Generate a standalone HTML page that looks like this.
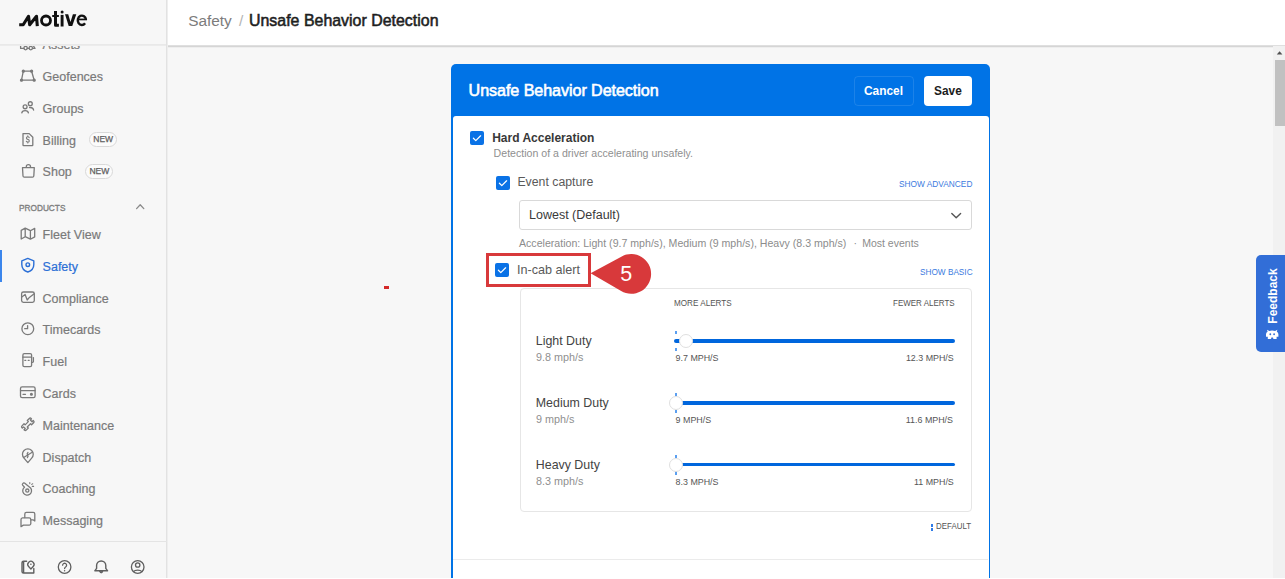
<!DOCTYPE html><html><head><meta charset="utf-8"><style>
*{margin:0;padding:0;box-sizing:border-box}
html,body{width:1285px;height:579px;overflow:hidden;background:#f7f7f7;font-family:"Liberation Sans",sans-serif}
.t{position:absolute;white-space:nowrap}
.a{position:absolute}
#sb{position:absolute;left:0;top:0;width:167px;height:579px;background:#f7f7f7;border-right:1px solid #e2e2e2}
#sbh{position:absolute;left:0;top:0;width:166px;height:44px;background:#f7f7f7}
#hd{position:absolute;left:168px;top:0;width:1117px;height:45px;background:#fff}
.badge{position:absolute;width:28px;height:14.6px;border:1px solid #d9d9d9;background:#fbfbfb;border-radius:7.5px;font-size:8.5px;font-weight:400;-webkit-text-stroke:0.25px #606060;color:#606060;text-align:center;line-height:12.2px;letter-spacing:0px}
.cb{position:absolute;width:14px;height:14px;border-radius:2px;background:#0a72e6}
.cb svg{position:absolute;left:0;top:0}
</style></head><body>
<div id="sb"></div>
<div class="t" style="left:42.60px;top:39.12px;font-size:12.5px;line-height:12.5px;color:#7a7a7a;font-weight:400;-webkit-text-stroke:0.2px #7a7a7a;">Assets</div>
<div class="t" style="left:42.60px;top:70.92px;font-size:12.5px;line-height:12.5px;color:#7a7a7a;font-weight:400;-webkit-text-stroke:0.2px #7a7a7a;">Geofences</div>
<div class="t" style="left:42.60px;top:102.72px;font-size:12.5px;line-height:12.5px;color:#7a7a7a;font-weight:400;-webkit-text-stroke:0.2px #7a7a7a;">Groups</div>
<div class="t" style="left:42.60px;top:134.52px;font-size:12.5px;line-height:12.5px;color:#7a7a7a;font-weight:400;-webkit-text-stroke:0.2px #7a7a7a;">Billing</div>
<div class="t" style="left:42.60px;top:166.32px;font-size:12.5px;line-height:12.5px;color:#7a7a7a;font-weight:400;-webkit-text-stroke:0.2px #7a7a7a;">Shop</div>
<div class="t" style="left:42.60px;top:228.92px;font-size:12.5px;line-height:12.5px;color:#7a7a7a;font-weight:400;-webkit-text-stroke:0.2px #7a7a7a;">Fleet View</div>
<div class="t" style="left:42.60px;top:260.72px;font-size:12.5px;line-height:12.5px;color:#2b6fd6;font-weight:400;-webkit-text-stroke:0.2px #2b6fd6;">Safety</div>
<div class="t" style="left:42.60px;top:292.52px;font-size:12.5px;line-height:12.5px;color:#7a7a7a;font-weight:400;-webkit-text-stroke:0.2px #7a7a7a;">Compliance</div>
<div class="t" style="left:42.60px;top:324.32px;font-size:12.5px;line-height:12.5px;color:#7a7a7a;font-weight:400;-webkit-text-stroke:0.2px #7a7a7a;">Timecards</div>
<div class="t" style="left:42.60px;top:356.12px;font-size:12.5px;line-height:12.5px;color:#7a7a7a;font-weight:400;-webkit-text-stroke:0.2px #7a7a7a;">Fuel</div>
<div class="t" style="left:42.60px;top:387.92px;font-size:12.5px;line-height:12.5px;color:#7a7a7a;font-weight:400;-webkit-text-stroke:0.2px #7a7a7a;">Cards</div>
<div class="t" style="left:42.60px;top:419.72px;font-size:12.5px;line-height:12.5px;color:#7a7a7a;font-weight:400;-webkit-text-stroke:0.2px #7a7a7a;">Maintenance</div>
<div class="t" style="left:42.60px;top:451.52px;font-size:12.5px;line-height:12.5px;color:#7a7a7a;font-weight:400;-webkit-text-stroke:0.2px #7a7a7a;">Dispatch</div>
<div class="t" style="left:42.60px;top:483.32px;font-size:12.5px;line-height:12.5px;color:#7a7a7a;font-weight:400;-webkit-text-stroke:0.2px #7a7a7a;">Coaching</div>
<div class="t" style="left:42.60px;top:515.12px;font-size:12.5px;line-height:12.5px;color:#7a7a7a;font-weight:400;-webkit-text-stroke:0.2px #7a7a7a;">Messaging</div>
<div class="t" style="left:19.00px;top:203.51px;font-size:9.2px;line-height:9.2px;color:#7e7e7e;font-weight:400;-webkit-text-stroke:0.35px #7e7e7e;transform:scaleX(0.9);transform-origin:0 0;">PRODUCTS</div>
<div class="badge" style="left:89.2px;top:132.1px;">NEW</div>
<div class="badge" style="left:85.3px;top:164.2px;">NEW</div>
<div class="a" style="left:0;top:250px;width:1.6px;height:32px;background:#3b86ec"></div>
<div class="a" style="left:0;top:541px;width:167px;height:1px;background:#e4e4e4"></div>
<svg class="a" style="left:0;top:0" width="166" height="579" viewBox="0 0 166 579" fill="none" stroke="#7a7a7a" stroke-width="1.3" stroke-linecap="round" stroke-linejoin="round">
<!-- assets (partial) -->
<path d="M20.6 44.5 V48.4 H23.9 M27.3 48.4 H29.1 M32.5 48.4 H35 L33.2 45.5"/><circle cx="25.6" cy="48.1" r="1.7"/><circle cx="30.8" cy="48.1" r="1.7"/>
<!-- geofences -->
<path d="M23.3 71.2 L31.6 71.2 L34.2 80.2 L21.5 80.2 Z"/>
<circle cx="23.3" cy="71.2" r="1" fill="#7a7a7a"/><circle cx="31.6" cy="71.2" r="1" fill="#7a7a7a"/><circle cx="34.2" cy="80.2" r="1" fill="#7a7a7a"/><circle cx="21.5" cy="80.2" r="1" fill="#7a7a7a"/>
<!-- groups -->
<circle cx="25.1" cy="106.8" r="1.95"/><path d="M21.8 112.9 Q22 110.6 25.1 110.6 Q28.2 110.6 28.4 112.9"/>
<circle cx="30.3" cy="103.7" r="1.95"/><path d="M29.6 107.5 Q33.1 107.3 33.6 110"/>
<!-- billing -->
<path d="M23 133.6 h6.2 l3.6 3.6 v7.8 a0.6 0.6 0 0 1 -0.6 0.6 h-8.6 a0.6 0.6 0 0 1 -0.6 -0.6 Z"/>
<path d="M29.2 137.7 Q28.9 136.8 27.8 136.8 Q26.4 136.8 26.4 138 Q26.4 139.1 27.8 139.4 Q29.3 139.7 29.3 140.9 Q29.3 142.1 27.8 142.1 Q26.6 142.1 26.3 141.3 M27.8 135.9 V136.8 M27.8 142.1 V143" stroke-width="1.1"/>
<!-- shop -->
<path d="M22.5 167.6 H34.3 L33.8 176 a1.3 1.3 0 0 1 -1.3 1.2 H24.3 a1.3 1.3 0 0 1 -1.3 -1.2 Z M26.3 167.6 V166.8 a2.1 2.1 0 0 1 4.2 0 V167.6"/>
<!-- products chevron -->
<path d="M136.6 208.6 l3.6 -3.8 l3.6 3.8" stroke="#8a8a8a" stroke-width="1.3"/>
<!-- fleet view -->
<path d="M21.2 230.4 L25.2 228.1 L30.4 230.7 L34.7 228.4 V236.9 L30.4 239.2 L25.2 236.7 L21.2 239 Z M25.2 228.1 V236.7 M30.4 230.7 V239.2"/>
<!-- safety shield -->
<path d="M27.8 258.4 l6 2.4 v3.6 c0 3.6 -2.6 6.4 -6 7.6 c-3.4 -1.2 -6 -4 -6 -7.6 v-3.6 Z" stroke="#2b6fd6" stroke-width="1.4"/>
<circle cx="27.8" cy="264.7" r="1.8" stroke="#2b6fd6" stroke-width="1.4"/>
<!-- compliance -->
<rect x="21.6" y="292" width="12.7" height="10.4" rx="1.8"/><path d="M21.8 297 L25.1 294.5 L27.2 300 L29 297.8 L34.2 293.8"/>
<!-- timecards -->
<circle cx="27.8" cy="328.7" r="5.9"/><path d="M27.6 325.6 v3.1 h-2.9"/>
<!-- fuel -->
<rect x="22.9" y="353.7" width="8.7" height="13" rx="1.4"/><path d="M22.9 357.2 H31.6 M24.8 360.3 h1 M28.2 360.3 h1 M31.6 362.3 H32.6 a0.8 0.8 0 0 0 0.8 -0.8 V357.6" />
<!-- cards -->
<rect x="20.5" y="386.8" width="14.6" height="10.8" rx="1.6"/><path d="M20.5 390.6 h14.6 M23 394.3 h2.5"/><circle cx="31.4" cy="394.3" r="0.9" fill="#7a7a7a"/>
<!-- maintenance wrench -->
<g transform="translate(27.8 424.3) rotate(-45)"><path d="M-2.3 -1.5 H2.3 V-3 H5.2 Q6.5 -3 6.5 -1.7 V-1.2 H4.8 V1.2 H6.5 V1.7 Q6.5 3 5.2 3 H2.3 V1.5 H-2.3 V3 H-5.2 Q-6.5 3 -6.5 1.7 V1.2 H-4.8 V-1.2 H-6.5 V-1.7 Q-6.5 -3 -5.2 -3 H-2.3 Z"/></g>
<!-- dispatch pin -->
<path d="M27.85 462.6 L24.03 458.12 A5.4 5.4 0 1 1 31.67 458.12 Z"/><path d="M23.7 457.5 L32.2 452.3 M27.9 452.4 Q26.6 453.6 27.6 455 Q28.6 456.3 27.4 457.6"/>
<!-- coaching whistle -->
<path d="M24.5 487.2 L22.6 485.1 Q22.1 484.5 22.6 483.9 L23.3 483.1 Q23.9 482.6 24.5 483.1 L30.6 488 A4.4 4.4 0 1 1 24.5 487.2"/><circle cx="27.3" cy="490.6" r="1.6"/>
<path d="M29.8 482.5 v1.1 M31.7 484.4 l1 -0.6 M32.3 486.4 h1.3" stroke-width="1.1"/>
<!-- messaging -->
<path d="M24.8 517.6 V514 a1.6 1.6 0 0 1 1.6 -1.6 H33.2 a1.6 1.6 0 0 1 1.6 1.6 V521 L33 519.8 H30.9"/>
<path d="M22.5 517.8 H29.2 a1.6 1.6 0 0 1 1.6 1.6 V523.5 a1.6 1.6 0 0 1 -1.6 1.6 H23.4 L21 526.6 V519.4 a1.6 1.6 0 0 1 1.5 -1.6 Z"/>
<!-- bottom icons -->
<path d="M23.6 561.2 a1.6 1.6 0 0 0 -1.6 1.6 v8.6 a1.6 1.6 0 0 0 1.6 1.6 h10.2 v-4.6 M23.6 561.2 v11.8 M23.6 561.2 h3" stroke="#5f5f5f" stroke-width="1.4"/>
<path d="M30.9 569 l-2.3 -2.5 a3.1 3.1 0 1 1 4.6 0 Z" stroke="#5f5f5f" stroke-width="1.3"/><circle cx="30.9" cy="564.2" r="0.8" fill="#5f5f5f" stroke="none"/>
<circle cx="64.6" cy="567" r="6.3" stroke="#5f5f5f"/><path d="M62.6 565.2 a2 2 0 1 1 3 1.8 c-0.7 0.4 -1 0.8 -1 1.6" stroke="#5f5f5f"/><circle cx="64.6" cy="570.8" r="0.7" fill="#5f5f5f" stroke="none"/>
<path d="M94.8 570.8 h12.8 l-1.8 -2.4 v-2.8 a4.6 4.6 0 0 0 -9.2 0 v2.8 Z" stroke="#5f5f5f" stroke-width="1.4"/><path d="M99.6 571.3 a1.6 1.6 0 0 0 3.2 0 Z" fill="#5f5f5f" stroke="#5f5f5f" stroke-width="1"/>
<circle cx="137.7" cy="567" r="6.3" stroke="#5f5f5f"/><circle cx="137.7" cy="565" r="2.2" stroke="#5f5f5f"/><path d="M133.4 571.6 a5 3.2 0 0 1 8.6 0" stroke="#5f5f5f"/>
</svg>
<div id="sbh"></div>
<div class="a" style="left:0;top:44px;width:166px;height:1px;background:#e9e9e9"></div><div class="a" style="left:0;top:45px;width:166px;height:1px;background:#ececec"></div>
<svg class="a" style="left:0;top:0" width="100" height="40" viewBox="0 0 100 40" fill="none" stroke="#111" stroke-width="3.2" stroke-linecap="butt" stroke-linejoin="round">
<path d="M19.2 24.75 H23.2 L28.5 16.3 L29.7 24.7 L36.5 16.3 L37.3 26.1" stroke-width="3.1"/>
<circle cx="46" cy="20.5" r="4.5" stroke-width="2.8"/>
<path d="M55.5 11 V25.2 H58.9" stroke-width="3"/><path d="M52.2 16 h6.7" stroke-width="2"/>
<circle cx="62.1" cy="12.1" r="1.5" fill="#111" stroke="none"/><path d="M62.1 14.9 v11.6" stroke-width="2.9"/>
<path d="M65 14.35 H68.2 L70.5 22 L72.9 14.35 H76.3 L72.25 26.1 H68.7 Z" fill="#111" stroke="none"/>
<path d="M77.6 19.45 H87" stroke-width="1.7"/>
<path d="M85.95 19.8 A4.1 4.65 0 1 0 85.05 23.25" stroke-width="2.45"/>
</svg>
<div id="hd"></div>
<div class="a" style="left:167px;top:0;width:1px;height:579px;background:#eeeeee"></div>
<div class="a" style="left:168px;top:45px;width:1117px;height:1px;background:#dfdfdf"></div><div class="a" style="left:168px;top:46px;width:1117px;height:1px;background:#d5d5d5"></div><div class="a" style="left:168px;top:47px;width:1117px;height:1px;background:#eeeeee"></div>
<div class="t" style="left:188.20px;top:13.36px;font-size:15.4px;line-height:15.4px;color:#7c7c7c;font-weight:400;">Safety</div>
<div class="t" style="left:239.00px;top:13.36px;font-size:15.4px;line-height:15.4px;color:#b5b5b5;font-weight:400;">/</div>
<div class="t" style="left:249.00px;top:12.64px;font-size:15.9px;line-height:15.9px;color:#1e1e1e;font-weight:400;-webkit-text-stroke:0.55px #1e1e1e;letter-spacing:0.02px;">Unsafe Behavior Detection</div>
<div class="a" style="left:451px;top:64px;width:539px;height:520px;background:#0073e6;border-radius:5px 5px 0 0"></div>
<div class="a" style="left:452.5px;top:116px;width:536px;height:470px;background:#fff;border-radius:3px 3px 0 0"></div>
<div class="t" style="left:468.60px;top:82.37px;font-size:16.1px;line-height:16.1px;color:#fff;font-weight:400;-webkit-text-stroke:0.6px #fff;letter-spacing:-0.06px;">Unsafe Behavior Detection</div>
<div class="a" style="left:853.5px;top:76px;width:60px;height:29.5px;border:1px solid rgba(255,255,255,0.11);border-radius:4px"></div>
<div class="t" style="left:864.00px;top:85.73px;font-size:11.9px;line-height:11.9px;color:#fff;font-weight:700;">Cancel</div>
<div class="a" style="left:924px;top:75.5px;width:48px;height:30px;background:#fff;border-radius:4px"></div>
<div class="t" style="left:934.00px;top:85.73px;font-size:11.9px;line-height:11.9px;color:#1c1c1c;font-weight:700;">Save</div>
<div class="cb" style="left:470px;top:131px"><svg width="14" height="14" viewBox="0 0 14 14"><path d="M3.4 7.2 l2.4 2.4 l4.8 -4.8" fill="none" stroke="#fff" stroke-width="1.25" stroke-linecap="round" stroke-linejoin="round"/></svg></div>
<div class="t" style="left:492.20px;top:131.94px;font-size:12.0px;line-height:12.0px;color:#383838;font-weight:700;">Hard Acceleration</div>
<div class="t" style="left:493.60px;top:148.13px;font-size:10.6px;line-height:10.6px;color:#8f8f8f;font-weight:400;">Detection of a driver accelerating unsafely.</div>
<div class="cb" style="left:495.5px;top:175.5px"><svg width="14" height="14" viewBox="0 0 14 14"><path d="M3.4 7.2 l2.4 2.4 l4.8 -4.8" fill="none" stroke="#fff" stroke-width="1.25" stroke-linecap="round" stroke-linejoin="round"/></svg></div>
<div class="t" style="left:517.40px;top:175.89px;font-size:12.3px;line-height:12.3px;color:#5a5a5a;font-weight:400;">Event capture</div>
<div class="t" style="left:898.60px;top:178.50px;font-size:9.8px;line-height:9.8px;color:#3c7be0;font-weight:400;transform:scaleX(0.85);transform-origin:0 0;">SHOW ADVANCED</div>
<div class="a" style="left:519px;top:200px;width:453px;height:30px;border:1px solid #d9d9d9;border-radius:3px"></div>
<div class="t" style="left:529.00px;top:208.72px;font-size:12.5px;line-height:12.5px;color:#3a3a3a;font-weight:400;">Lowest (Default)</div>
<svg class="a" style="left:948px;top:208px" width="16" height="16" viewBox="0 0 16 16"><path d="M3.8 5.4 l4.4 4.4 l4.4 -4.4" fill="none" stroke="#555" stroke-width="1.4" stroke-linecap="round" stroke-linejoin="round"/></svg>
<div class="t" style="left:519.00px;top:238.13px;font-size:10.6px;line-height:10.6px;color:#8c8c8c;font-weight:400;">Acceleration: Light (9.7 mph/s), Medium (9 mph/s), Heavy (8.3 mph/s)</div>
<div class="t" style="left:853.60px;top:238.13px;font-size:10.6px;line-height:10.6px;color:#8c8c8c;font-weight:400;">&middot;</div>
<div class="t" style="left:862.20px;top:238.21px;font-size:10.5px;line-height:10.5px;color:#8c8c8c;font-weight:400;">Most events</div>
<div class="cb" style="left:495.3px;top:263px"><svg width="14" height="14" viewBox="0 0 14 14"><path d="M3.4 7.2 l2.4 2.4 l4.8 -4.8" fill="none" stroke="#fff" stroke-width="1.25" stroke-linecap="round" stroke-linejoin="round"/></svg></div>
<div class="t" style="left:517.00px;top:263.83px;font-size:12.6px;line-height:12.6px;color:#5a5a5a;font-weight:400;">In-cab alert</div>
<div class="t" style="left:919.60px;top:266.60px;font-size:9.8px;line-height:9.8px;color:#3c7be0;font-weight:400;transform:scaleX(0.84);transform-origin:0 0;">SHOW BASIC</div>
<div class="a" style="left:519.5px;top:288px;width:452.5px;height:223.5px;border:1px solid #e6e6e6;border-radius:4px"></div>
<div class="t" style="left:673.80px;top:299.01px;font-size:9.2px;line-height:9.2px;color:#555;font-weight:400;transform:scaleX(0.885);transform-origin:0 0;">MORE ALERTS</div>
<div class="t" style="left:892.90px;top:299.01px;font-size:9.2px;line-height:9.2px;color:#555;font-weight:400;transform:scaleX(0.87);transform-origin:0 0;">FEWER ALERTS</div>
<div class="t" style="left:535.80px;top:335.10px;font-size:12.4px;line-height:12.4px;color:#444;font-weight:400;">Light Duty</div>
<div class="t" style="left:536.00px;top:352.16px;font-size:10.8px;line-height:10.8px;color:#8f8f8f;font-weight:400;">9.8 mph/s</div>
<div class="a" style="left:674px;top:339.05px;width:281px;height:3.5px;background:#0066dd;border-radius:2px"></div>
<div class="a" style="left:675px;top:330.80px;width:1.6px;height:3.4px;background:#5b9ff0"></div>
<div class="a" style="left:675px;top:347.60px;width:1.6px;height:3.4px;background:#5b9ff0"></div>
<div class="a" style="left:679.00px;top:334.20px;width:14px;height:14px;background:#fff;border:1px solid #dfdfdf;border-radius:50%"></div>
<div class="t" style="left:675.60px;top:353.77px;font-size:8.9px;line-height:8.9px;color:#555;font-weight:400;">9.7 MPH/S</div>
<div class="t" style="left:905.90px;top:353.77px;font-size:8.9px;line-height:8.9px;color:#555;font-weight:400;">12.3 MPH/S</div>
<div class="t" style="left:535.80px;top:397.10px;font-size:12.4px;line-height:12.4px;color:#444;font-weight:400;">Medium Duty</div>
<div class="t" style="left:536.00px;top:414.16px;font-size:10.8px;line-height:10.8px;color:#8f8f8f;font-weight:400;">9 mph/s</div>
<div class="a" style="left:674px;top:401.05px;width:281px;height:3.5px;background:#0066dd;border-radius:2px"></div>
<div class="a" style="left:675px;top:392.80px;width:1.6px;height:3.4px;background:#5b9ff0"></div>
<div class="a" style="left:675px;top:409.60px;width:1.6px;height:3.4px;background:#5b9ff0"></div>
<div class="a" style="left:668.50px;top:396.20px;width:14px;height:14px;background:#fff;border:1px solid #dfdfdf;border-radius:50%"></div>
<div class="t" style="left:675.60px;top:415.77px;font-size:8.9px;line-height:8.9px;color:#555;font-weight:400;">9 MPH/S</div>
<div class="t" style="left:905.80px;top:415.77px;font-size:8.9px;line-height:8.9px;color:#555;font-weight:400;">11.6 MPH/S</div>
<div class="t" style="left:535.80px;top:458.90px;font-size:12.4px;line-height:12.4px;color:#444;font-weight:400;">Heavy Duty</div>
<div class="t" style="left:536.00px;top:475.96px;font-size:10.8px;line-height:10.8px;color:#8f8f8f;font-weight:400;">8.3 mph/s</div>
<div class="a" style="left:674px;top:462.85px;width:281px;height:3.5px;background:#0066dd;border-radius:2px"></div>
<div class="a" style="left:675px;top:454.60px;width:1.6px;height:3.4px;background:#5b9ff0"></div>
<div class="a" style="left:675px;top:471.40px;width:1.6px;height:3.4px;background:#5b9ff0"></div>
<div class="a" style="left:668.50px;top:458.00px;width:14px;height:14px;background:#fff;border:1px solid #dfdfdf;border-radius:50%"></div>
<div class="t" style="left:675.60px;top:477.57px;font-size:8.9px;line-height:8.9px;color:#555;font-weight:400;">8.3 MPH/S</div>
<div class="t" style="left:914.00px;top:477.57px;font-size:8.9px;line-height:8.9px;color:#555;font-weight:400;">11 MPH/S</div>
<div class="a" style="left:931px;top:524px;width:2px;height:2.6px;background:#2f7be6"></div>
<div class="a" style="left:931px;top:528.4px;width:2px;height:2.6px;background:#2f7be6"></div>
<div class="t" style="left:936.20px;top:522.38px;font-size:9.0px;line-height:9.0px;color:#555;font-weight:400;transform:scaleX(0.88);transform-origin:0 0;">DEFAULT</div>
<div class="a" style="left:453px;top:559px;width:535px;height:1px;background:#ebebeb"></div>
<div class="a" style="left:486px;top:253px;width:105px;height:34px;border:3px solid #d8393b"></div>
<svg class="a" style="left:580px;top:248px" width="80" height="52" viewBox="580 248 80 52"><path d="M590.6 273.2 L621.75 256.39 A19.9 19.9 0 1 1 621.15 291.07 Z" fill="#d8393b"/></svg>
<div class="t" style="left:620.30px;top:263.70px;font-size:21.5px;line-height:21.5px;color:#fff;font-weight:400;">5</div>
<div class="a" style="left:384px;top:286px;width:5px;height:3px;background:#d42a2a"></div>
<div class="a" style="left:1273px;top:46px;width:12px;height:533px;background:#f1f1f1"></div>
<svg class="a" style="left:1273px;top:46px" width="12" height="12" viewBox="0 0 12 12"><path d="M3.8 8.6 L6.6 5.2 L9.4 8.6 Z" fill="#505050"/></svg>
<div class="a" style="left:1275px;top:60px;width:10px;height:65.5px;background:#c1c1c1"></div>
<div class="a" style="left:1256px;top:255px;width:35px;height:97px;background:#326ed7;border-radius:5px"></div>
<div class="t" style="left:1272.5px;top:296px;font-size:12px;line-height:12px;font-weight:700;color:#fff;transform:translate(-50%,-50%) rotate(-90deg)">Feedback</div>
<svg class="a" style="left:1262px;top:322px" width="22" height="24" viewBox="1262 322 22 24"><path d="M1267.6 331.8 L1267 329.8 L1269.3 331 Q1270.3 330.6 1272.2 330.6 Q1274.1 330.6 1275.1 331 L1277.4 329.8 L1276.8 331.8 Q1278.4 332.6 1278.4 334.2 L1278.4 336.8 L1276.6 336.8 L1276.6 339 L1273.4 339 L1273 337.4 L1271.4 337.4 L1271 339 L1267.8 339 L1267.8 336.8 L1266 336.8 L1266 334.2 Q1266 332.6 1267.6 331.8 Z" fill="#fff"/><ellipse cx="1270.3" cy="334.3" rx="0.9" ry="1" fill="#326ed7"/><ellipse cx="1274.1" cy="334.3" rx="0.9" ry="1" fill="#326ed7"/></svg>
<div class="a" style="left:0;top:578px;width:1285px;height:1px;background:#fff"></div>
</body></html>
